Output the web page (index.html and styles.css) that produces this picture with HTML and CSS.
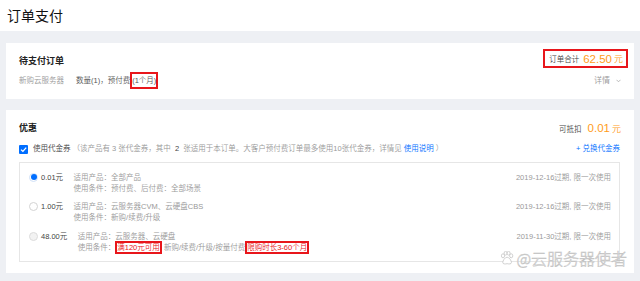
FILE: index.html
```html
<!DOCTYPE html>
<html lang="zh-CN">
<head>
<meta charset="utf-8">
<title>订单支付</title>
<link rel="stylesheet" href="styles.css">
</head>
<body>
<header class="header"><h1 class="title">订单支付</h1></header>
<main class="main">
  <section class="card order">
    <div class="order-left">
      <div class="card-title">待支付订单</div>
      <div class="order-line">
        <span class="muted">新购云服务器</span>
        <span class="qty">数量(1)，预付费<span class="mark">(1个月)</span></span>
      </div>
    </div>
    <div class="order-right">
      <div class="total"><span class="total-label">订单合计</span><span class="price">62.50</span><span class="unit">元</span></div>
      <div class="detail">详情<svg class="chev" width="5" height="4" viewBox="0 0 5 4"><path d="M0.5 0.8 L2.5 2.8 L4.5 0.8" fill="none" stroke="#aaa" stroke-width="0.8"/></svg></div>
    </div>
  </section>

  <section class="card coupon">
    <div class="coupon-head">
      <div class="card-title">优惠</div>
      <div class="deduct"><span class="deduct-label">可抵扣</span><span class="price">0.01</span><span class="unit">元</span></div>
    </div>
    <div class="use-row">
      <div class="use">
        <span class="checkbox"><svg width="9" height="9" viewBox="0 0 9 9"><path d="M2 4.6 L3.9 6.4 L7.2 2.6" fill="none" stroke="#fff" stroke-width="1.3"/></svg></span>
        <span class="use-label">使用代金券</span>
        <span class="use-desc">（该产品有 3 张代金券，其中 &nbsp;<b class="num">2</b>&nbsp; 张适用于本订单。大客户预付费订单最多使用10张代金券，详情见 <span class="link">使用说明</span> ）</span>
      </div>
      <span class="redeem">+ 兑换代金券</span>
    </div>
    <div class="vouchers">
      <div class="voucher">
        <span class="radio checked"></span>
        <span class="amount">0.01元</span>
        <div class="info">
          <div>适用产品：全部产品</div>
          <div>使用条件：预付费、后付费：全部场景</div>
        </div>
        <span class="date">2019-12-16过期, 限一次使用</span>
      </div>
      <div class="voucher">
        <span class="radio"></span>
        <span class="amount">1.00元</span>
        <div class="info">
          <div>适用产品：云服务器CVM、云硬盘CBS</div>
          <div>使用条件：新购/续费/升级</div>
        </div>
        <span class="date">2019-12-16过期, 限一次使用</span>
      </div>
      <div class="voucher">
        <span class="radio disabled"></span>
        <span class="amount">48.00元</span>
        <div class="info">
          <div>适用产品：云服务器、云硬盘</div>
          <div>使用条件：<span class="mark red">满120元可用</span> 新购/续费/升级/按量付费<span class="mark red">限购时长3-60个月</span></div>
        </div>
        <span class="date">2019-11-30过期, 限一次使用</span>
      </div>
    </div>
  </section>
</main>
<div class="watermark">
  <svg class="paw" width="14" height="14" viewBox="0 0 14 14" fill="#fff" stroke="#bdbdbd" stroke-width="0.7">
    <ellipse cx="3" cy="4.8" rx="1.6" ry="2"/>
    <ellipse cx="5.6" cy="2.2" rx="1.5" ry="1.9"/>
    <ellipse cx="8.6" cy="2.2" rx="1.5" ry="1.9"/>
    <ellipse cx="11.2" cy="4.8" rx="1.6" ry="2"/>
    <path d="M7.1 6.2 C5 6.2 2.6 9.8 2.8 11.6 C3 13.2 5 13.1 7.1 12.7 C9.2 13.1 11.2 13.2 11.4 11.6 C11.6 9.8 9.2 6.2 7.1 6.2 Z"/>
  </svg>
  <span class="wm-text">@云服务器使者</span>
</div>
</body>
</html>
```
FILE: styles.css
```css
* { box-sizing: border-box; }

body {
  margin: 0;
  background: #eef0f4;
  font-family: "Liberation Sans", "Noto Sans CJK SC", sans-serif;
  font-size: 7.5px;
  font-weight: 350;
  color: #333;
  position: relative;
  min-height: 281px;
}

.header {
  height: 31px;
  background: #fff;
  display: flex;
  align-items: center;
  padding-left: 7px;
}

.title {
  margin: 0;
  font-size: 14px;
  font-weight: normal;
  line-height: 1;
  color: #111;
}

.main {
  padding: 12px 6px 0;
  display: flex;
  flex-direction: column;
  gap: 11px;
}

.card { background: #fff; }

.card-title {
  font-size: 9px;
  font-weight: bold;
  line-height: 12px;
  color: #222;
}

/* order card */
.order {
  height: 56px;
  display: flex;
  justify-content: space-between;
  padding: 0 6px 0 13px;
}

.order-left { padding-top: 12px; }

.order-line {
  margin-top: 8px;
  line-height: 12px;
  display: flex;
  gap: 12px;
}

.muted { color: #999; }
.qty { color: #555; }

.mark {
  border: 2px solid #e8161b;
  padding: 2px 0;
}

.mark.red {
  color: #e8161b;
  padding: 0;
}

.order-right {
  padding-top: 6px;
  display: flex;
  flex-direction: column;
  align-items: flex-end;
}

.total {
  height: 19px;
  display: flex;
  align-items: center;
  border: 2px solid #e8161b;
  padding: 0 3px 0 4px;
}

.total-label { color: #444; margin-right: 4px; }

.price {
  color: #ff9c19;
  font-size: 11.5px;
  font-weight: normal;
}

.unit {
  color: #ff9c19;
  font-size: 9px;
  margin-left: 2px;
}

.detail {
  margin-top: 7px;
  margin-right: 7px;
  line-height: 12px;
  font-size: 8px;
  color: #999;
  display: flex;
  align-items: center;
  gap: 6px;
}

/* coupon card */
.coupon { padding: 12px 14px 11px 13px; }

.coupon-head {
  height: 12px;
  display: flex;
  justify-content: space-between;
  align-items: center;
}

.deduct {
  display: flex;
  align-items: baseline;
  margin-right: -1px;
}

.deduct-label { color: #444; margin-right: 6px; }

.use-row {
  margin-top: 9px;
  line-height: 12px;
  display: flex;
  justify-content: space-between;
  align-items: center;
}

.use { display: flex; align-items: center; }

.checkbox {
  width: 9px;
  height: 9px;
  background: #006eff;
  border-radius: 1px;
  display: inline-flex;
  margin-right: 5px;
}

.use-label { color: #444; margin-right: 2px; }
.use-desc { color: #999; white-space: pre; }
.num { color: #444; font-weight: normal; }
.link { color: #006eff; }
.redeem { color: #006eff; }

.vouchers {
  margin-top: 7px;
  border: 1px solid #e6e6e6;
  padding: 8.5px 8px 8.5px 9px;
  display: flex;
  flex-direction: column;
  gap: 7.5px;
}

.voucher {
  display: flex;
  align-items: flex-start;
  line-height: 11px;
}

.radio {
  width: 9px;
  height: 9px;
  border: 1px solid #d3d3d3;
  border-radius: 50%;
  background: #fff;
  margin-top: 1px;
  margin-right: 3px;
  display: flex;
  align-items: center;
  justify-content: center;
}

.radio.checked { border-color: #cfe0f7; }
.radio.checked::after {
  content: "";
  width: 6px;
  height: 6px;
  border-radius: 50%;
  background: #006eff;
}

.radio.disabled { background: #f2f2f2; border-color: #dcdcdc; }

.amount {
  color: #444;
  margin-right: 10.5px;
}

.info {
  flex: 1;
  color: #999;
}

.date { color: #999; }

/* watermark overlay */
.watermark {
  position: absolute;
  right: 13px;
  top: 250px;
  display: flex;
  align-items: center;
  gap: 2px;
}

.wm-text {
  font-family: "Noto Sans CJK SC", sans-serif;
  font-size: 16px;
  font-weight: 300;
  line-height: 16px;
  color: #fff;
  -webkit-text-stroke: 0.5px #bdbdbd;
}
```
